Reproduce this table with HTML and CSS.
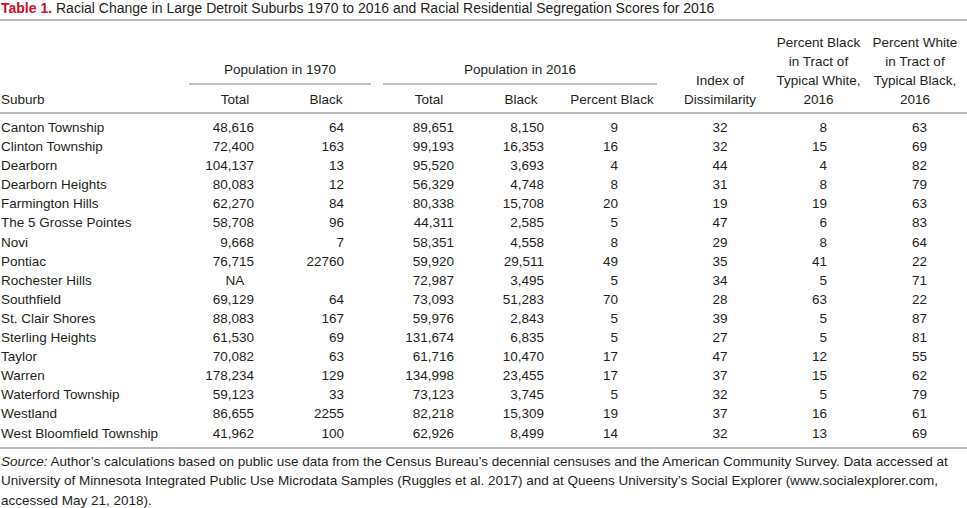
FILE: index.html
```html
<!DOCTYPE html>
<html>
<head>
<meta charset="utf-8">
<link rel="stylesheet" href="styles.css">
</head>
<body>
<div class="title"><span class="label">Table 1.</span> Racial Change in Large Detroit Suburbs 1970 to 2016 and Racial Residential Segregation Scores for 2016</div>
<table class="data">
<colgroup>
<col class="c1"><col class="c2"><col class="c3"><col class="c4"><col class="c5"><col class="c6"><col class="c7"><col class="c8"><col class="c9"><col class="c10">
</colgroup>
<thead>
<tr class="r1">
<th rowspan="2" class="rule sub">Suburb</th>
<th colspan="2" class="group">Population in 1970</th>
<th rowspan="2" class="rule"></th>
<th colspan="3" class="group">Population in 2016</th>
<th rowspan="2" class="rule idx">Index of<br>Dissimilarity</th>
<th rowspan="2" class="rule">Percent Black<br>in Tract of<br>Typical White,<br>2016</th>
<th rowspan="2" class="rule pw">Percent White<br>in Tract of<br>Typical Black,<br>2016</th>
</tr>
<tr class="r2">
<th class="rule">Total</th>
<th class="rule">Black</th>
<th class="rule">Total</th>
<th class="rule">Black</th>
<th class="rule">Percent Black</th>
</tr>
</thead>
<tbody>
<tr><td>Canton Township</td><td>48,616</td><td>64</td><td></td><td>89,651</td><td>8,150</td><td>9</td><td>32</td><td>8</td><td>63</td></tr>
<tr><td>Clinton Township</td><td>72,400</td><td>163</td><td></td><td>99,193</td><td>16,353</td><td>16</td><td>32</td><td>15</td><td>69</td></tr>
<tr><td>Dearborn</td><td>104,137</td><td>13</td><td></td><td>95,520</td><td>3,693</td><td>4</td><td>44</td><td>4</td><td>82</td></tr>
<tr><td>Dearborn Heights</td><td>80,083</td><td>12</td><td></td><td>56,329</td><td>4,748</td><td>8</td><td>31</td><td>8</td><td>79</td></tr>
<tr><td>Farmington Hills</td><td>62,270</td><td>84</td><td></td><td>80,338</td><td>15,708</td><td>20</td><td>19</td><td>19</td><td>63</td></tr>
<tr><td>The 5 Grosse Pointes</td><td>58,708</td><td>96</td><td></td><td>44,311</td><td>2,585</td><td>5</td><td>47</td><td>6</td><td>83</td></tr>
<tr><td>Novi</td><td>9,668</td><td>7</td><td></td><td>58,351</td><td>4,558</td><td>8</td><td>29</td><td>8</td><td>64</td></tr>
<tr><td>Pontiac</td><td>76,715</td><td>22760</td><td></td><td>59,920</td><td>29,511</td><td>49</td><td>35</td><td>41</td><td>22</td></tr>
<tr><td>Rochester Hills</td><td class="na">NA</td><td></td><td></td><td>72,987</td><td>3,495</td><td>5</td><td>34</td><td>5</td><td>71</td></tr>
<tr><td>Southfield</td><td>69,129</td><td>64</td><td></td><td>73,093</td><td>51,283</td><td>70</td><td>28</td><td>63</td><td>22</td></tr>
<tr><td>St. Clair Shores</td><td>88,083</td><td>167</td><td></td><td>59,976</td><td>2,843</td><td>5</td><td>39</td><td>5</td><td>87</td></tr>
<tr><td>Sterling Heights</td><td>61,530</td><td>69</td><td></td><td>131,674</td><td>6,835</td><td>5</td><td>27</td><td>5</td><td>81</td></tr>
<tr><td>Taylor</td><td>70,082</td><td>63</td><td></td><td>61,716</td><td>10,470</td><td>17</td><td>47</td><td>12</td><td>55</td></tr>
<tr><td>Warren</td><td>178,234</td><td>129</td><td></td><td>134,998</td><td>23,455</td><td>17</td><td>37</td><td>15</td><td>62</td></tr>
<tr><td>Waterford Township</td><td>59,123</td><td>33</td><td></td><td>73,123</td><td>3,745</td><td>5</td><td>32</td><td>5</td><td>79</td></tr>
<tr><td>Westland</td><td>86,655</td><td>2255</td><td></td><td>82,218</td><td>15,309</td><td>19</td><td>37</td><td>16</td><td>61</td></tr>
<tr><td>West Bloomfield Township</td><td>41,962</td><td>100</td><td></td><td>62,926</td><td>8,499</td><td>14</td><td>32</td><td>13</td><td>69</td></tr>
</tbody>
</table>
<p class="source"><em>Source:</em> Author’s calculations based on public use data from the Census Bureau’s decennial censuses and the American Community Survey. Data accessed at<br>University of Minnesota Integrated Public Use Microdata Samples (Ruggles et al. 2017) and at Queens University’s Social Explorer (www.socialexplorer.com,<br>accessed May 21, 2018).</p>
</body>
</html>
```
FILE: styles.css
```css
html, body {
  margin: 0;
  padding: 0;
  background: #ffffff;
}
body {
  font-family: "Liberation Sans", Arial, sans-serif;
  font-size: 13.5px;
  color: #231f20;
  width: 967px;
}
.title {
  font-size: 14px;
  line-height: 17px;
  padding: 0 0 2px 1px;
  border-bottom: 2px solid #b9b9b9;
  white-space: nowrap;
}
.title .label {
  color: #c8102e;
  font-weight: bold;
}
.data {
  width: 967px;
  table-layout: fixed;
  border-collapse: separate;
  border-spacing: 0;
  line-height: 19px;
}
.c1 { width: 189px; }
.c2 { width: 92px; }
.c3 { width: 90px; }
.c4 { width: 12px; }
.c5 { width: 92px; }
.c6 { width: 92px; }
.c7 { width: 90px; }
.c8 { width: 115px; }
.c9 { width: 93px; }
.c10 { width: 102px; }
th {
  font-weight: normal;
  text-align: center;
  vertical-align: bottom;
  padding: 0 0 3px 0;
  white-space: nowrap;
}
.r1 { height: 64px; }
.r2 { height: 29px; }
.r2 th { padding-top: 5px; }
th.group {
  padding-bottom: 4px;
  border-bottom: 2px solid #c2c2c2;
}
th.rule {
  border-bottom: 2px solid #b9b9b9;
}
th.sub {
  text-align: left;
  padding-left: 1px;
}
th.idx { padding-left: 11px; }
th.pw { padding-right: 2px; }
td {
  padding: 0;
  line-height: 19.1px;
  text-align: right;
  white-space: nowrap;
}
td:nth-child(1) { text-align: left; padding-left: 1px; }
td:nth-child(2) { padding-right: 27px; }
td:nth-child(3) { padding-right: 27px; }
td:nth-child(5) { padding-right: 21px; }
td:nth-child(6) { padding-right: 23px; }
td:nth-child(7) { padding-right: 39px; }
td:nth-child(8) { text-align: center; padding-left: 11px; }
td:nth-child(9) { padding-right: 38px; }
td:nth-child(10) { padding-right: 40px; }
td.na { text-align: center; padding-right: 0; }
tbody tr:first-child td { padding-top: 4px; }
tbody tr:last-child td {
  padding-bottom: 4px;
  border-bottom: 2px solid #b9b9b9;
}
.source {
  margin: 3px 0 0 0;
  padding-left: 1px;
  line-height: 19.5px;
  white-space: nowrap;
}
```
